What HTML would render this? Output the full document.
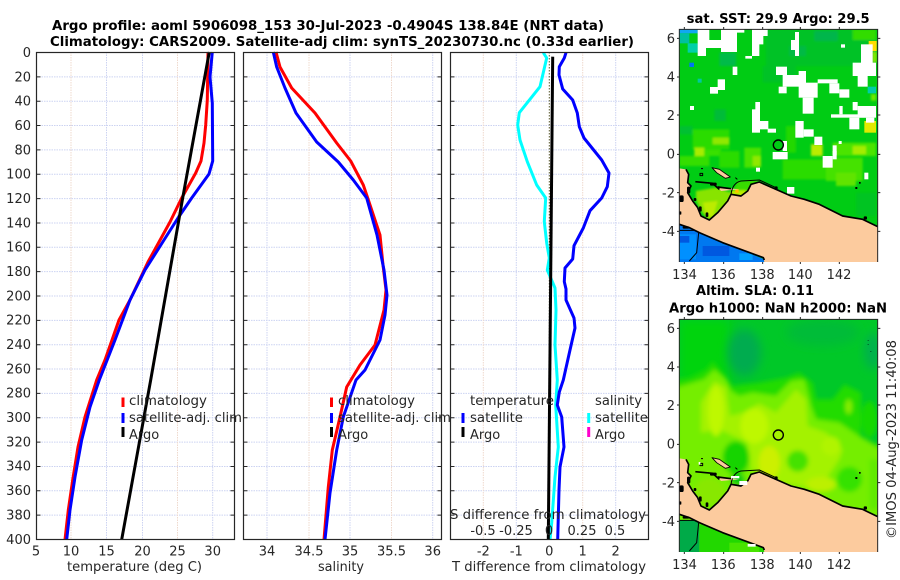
<!DOCTYPE html>
<html><head><meta charset="utf-8"><style>
html,body{margin:0;padding:0;background:#fff}
svg{display:block}
text{font-family:"DejaVu Sans","Liberation Sans",sans-serif;font-size:13px;fill:#262626}
.b{font-weight:bold;fill:#000}
.r{text-anchor:end}.m{text-anchor:middle}
</style></head><body>
<svg width="900" height="580" viewBox="0 0 900 580" xmlns="http://www.w3.org/2000/svg">
<defs>
<path id="hg" d="M0 76.85H198M0 101.2H198M0 125.55H198M0 149.9H198M0 174.25H198M0 198.6H198M0 222.95H198M0 247.3H198M0 271.65H198M0 296H198M0 320.35H198M0 344.7H198M0 369.05H198M0 393.4H198M0 417.75H198M0 442.1H198M0 466.45H198M0 490.8H198M0 515.15H198" fill="none" stroke="#ccd3f2" stroke-dasharray="1.5 1"/>
<path id="tk" d="M0 76.85h4M198 76.85h-4M0 101.2h4M198 101.2h-4M0 125.55h4M198 125.55h-4M0 149.9h4M198 149.9h-4M0 174.25h4M198 174.25h-4M0 198.6h4M198 198.6h-4M0 222.95h4M198 222.95h-4M0 247.3h4M198 247.3h-4M0 271.65h4M198 271.65h-4M0 296h4M198 296h-4M0 320.35h4M198 320.35h-4M0 344.7h4M198 344.7h-4M0 369.05h4M198 369.05h-4M0 393.4h4M198 393.4h-4M0 417.75h4M198 417.75h-4M0 442.1h4M198 442.1h-4M0 466.45h4M198 466.45h-4M0 490.8h4M198 490.8h-4M0 515.15h4M198 515.15h-4" fill="none" stroke="#262626"/>
<filter id="bl" x="-10%" y="-10%" width="120%" height="120%"><feGaussianBlur stdDeviation="7"/></filter>
<filter id="b1" x="-5%" y="-5%" width="110%" height="110%"><feGaussianBlur stdDeviation="3"/></filter>
<filter id="b2" x="-40%" y="-40%" width="180%" height="180%"><feGaussianBlur stdDeviation="14"/></filter>
<clipPath id="cm"><rect x="10" y="10" width="595" height="698"/></clipPath>
<g id="land">
<path d="M10 427L30 430L38 445L35 470L45 480L35 500L50 525L65 545L75 570L100 582L125 560L155 525L165 505L195 510L215 495L225 475L250 468L300 490L345 510L385 520L430 535L500 570L560 580L605 602V708H265L262 695L140 650L70 620L40 605L10 595Z" fill="#fccb9e"/>
<path d="M125 483L190 490L135 495Z" fill="#fccb9e"/>
<path d="M108 425L130 430L163 453L148 457L122 440Z" fill="#fccb9e"/>
<g fill="none" stroke="#000" stroke-width="5" stroke-linejoin="round" clip-path="url(#cm)">
<path d="M30 430L38 445L35 470L45 480L35 500L50 525L65 545L75 570L100 582L125 560L155 525L165 505L195 510L215 495L225 475L250 468L300 490L345 510L385 520L430 535L500 570L560 580L605 602"/>
<path d="M265 702L262 695L140 650L70 620L40 605L10 595"/>
<path d="M58 467L110 472L130 490M125 483L165 488" stroke-width="5"/>
<path d="M165 505Q170 470 195 465L250 462L300 485" stroke-width="3"/>
<path d="M108 425L130 430L163 453L148 457L122 440Z" stroke-width="2.500"/>
<path d="M72 442h8v7h-8zM178 455l6 5M75 428h6" stroke-width="3"/>
<path d="M68 620L62 680L40 705M10 613H55" stroke-width="3"/>
</g>
<g fill="#000">
<rect x="10" y="508" width="13" height="20" rx="5"/><rect x="33" y="482" width="10" height="20" rx="4"/><rect x="53" y="516" width="8" height="9" rx="3"/><rect x="69" y="541" width="8" height="16" rx="3"/><rect x="89" y="559" width="8" height="14" rx="3"/><rect x="10" y="556" width="6" height="10" rx="2"/><rect x="102" y="470" width="20" height="9" rx="3"/><rect x="296" y="481" width="9" height="11" rx="3"/><rect x="563" y="571" width="10" height="10" rx="3"/><rect x="538" y="483" width="6" height="6"/><rect x="549" y="468" width="5" height="5"/><rect x="20" y="601" width="20" height="7" rx="3"/>
</g>
</g>
<g id="fr" fill="none" stroke="#262626" stroke-width="3">
<path d="M10 708V10H605V708"/>
<path d="M25 10V3M143 10V3M260 10V3M373 10V3M490 10V3M25 708v6M143 708v6M260 708v6M373 708v6M490 708v6M605 37h8M605 153h8M605 267h8M605 385h8M605 500h8M605 616h8M10 37H3M10 153H3M10 267H3M10 385H3M10 500H3M10 616H3"/>
<circle cx="307" cy="357" r="15" stroke="#000" stroke-width="4.200"/>
</g>
</defs>
<rect width="900" height="580" fill="#fff"/>

<!-- titles -->
<text class="b" x="52" y="30" textLength="552" lengthAdjust="spacingAndGlyphs">Argo profile: aoml 5906098_153 30-Jul-2023 -0.4904S 138.84E (NRT data)</text>
<text class="b" x="50" y="46" textLength="584" lengthAdjust="spacingAndGlyphs">Climatology: CARS2009. Satellite-adj clim: synTS_20230730.nc (0.33d earlier)</text>

<!-- panel grids -->
<use href="#hg" x="36.5"/><use href="#hg" x="243.5"/><use href="#hg" x="450.5"/>
<g fill="none" stroke-dasharray="1.5 1">
<path d="M71 52V540M177.5 52V540M309 52V540M391.5 52V540M483.3 52V540M582.7 52V540" stroke="#efd9cd"/>
<path d="M106.5 52V540M142.5 52V540M212.7 52V540M267 52V540M350 52V540M432.7 52V540M516.3 52V540M615.7 52V540" stroke="#ccd3f2"/>
</g>
<path d="M549.3 52V540" fill="none" stroke="#5a5a30" stroke-dasharray="1.5 1.5"/>

<!-- curves -->
<g fill="none" stroke-width="3" stroke-linejoin="round">
<path stroke="#f00" d="M208 52L207.3 100L205.7 125L204 143L201 161L195.7 173L181.7 198L170 222L148 262L130 300L119 320L105 360L96.7 380L85 417L78 447L72.7 480L68.3 510L65 539.5"/>
<path stroke="#00f" d="M212.3 52L210 77L212.3 103L212.7 161L209 174L191.7 198L178 218L164 240L145 270L130 300L115 340L99.3 380L90 407L81.7 440L75 477L70 510L66.7 539.5"/>
<path stroke="#000" d="M209.3 52L182.7 198L150.7 380L121.7 539.5"/>
<path stroke="#f00" d="M276 52L280 67L291.7 88L315 113L336.7 143L350.7 161L363.3 185L367.7 198L380 235L383 265L386 290L384 310L375 345L360 365L346.7 387L340 417L332.3 450L328.3 487L324 539.5"/>
<path stroke="#00f" d="M273.3 52L276.7 67L285 88L296 113L316.7 142L338.3 162L353.3 180L366.7 198L377 235L384 270L387 295L385 315L380 340L365 370L356 380L343.3 417L336.7 450L330 493L325 539.5"/>
<path stroke="#0ff" d="M543.3 52.7L546.7 58L540 86.7L519.3 112.7L517.7 125L520 140L527.3 161.7L536.7 185L545.7 198L544.3 221.7L546.7 243L549.3 258L547.3 270L555 288L556 310L555 345L557.3 380L555.7 405L558.3 447L555 477L551.7 523L550 539.5"/>
<path stroke="#00f" d="M566 52.7L564.3 58L559.3 66.7L559 75L562.7 89L572.7 100L577.3 113L579.3 126.7L584 138L601.7 160L609 173L607.3 186.7L601.7 198L590 210.7L583.3 228L574 245.7L572.7 259L565 268L564.3 281.7L566 289L566 300L574 318L575 328L570 350L563.3 380L559.3 392L557.3 405L561.7 417L564 447L560 467L559 490L557.7 539.5"/>
<path stroke="#000" stroke-width="3" d="M552.7 56.7L548.3 539.5"/>
</g>

<use href="#tk" x="36.5"/><use href="#tk" x="243.5"/><use href="#tk" x="450.5"/>
<g fill="none" stroke="#262626" stroke-width="1.2">
<rect x="36.5" y="52.5" width="198" height="487"/>
<rect x="243.5" y="52.5" width="198" height="487"/>
<rect x="450.5" y="52.5" width="198" height="487"/>
</g>

<!-- y labels -->
<g>
<text class="r" x="31" y="57">0</text><text class="r" x="31" y="81.500">20</text><text class="r" x="31" y="105.500">40</text><text class="r" x="31" y="130">60</text><text class="r" x="31" y="154.500">80</text><text class="r" x="31" y="178.500">100</text><text class="r" x="31" y="203">120</text><text class="r" x="31" y="227.500">140</text><text class="r" x="31" y="251.500">160</text><text class="r" x="31" y="276">180</text><text class="r" x="31" y="300.500">200</text><text class="r" x="31" y="324.500">220</text><text class="r" x="31" y="349">240</text><text class="r" x="31" y="373.500">260</text><text class="r" x="31" y="397.500">280</text><text class="r" x="31" y="422">300</text><text class="r" x="31" y="446.500">320</text><text class="r" x="31" y="470.500">340</text><text class="r" x="31" y="495">360</text><text class="r" x="31" y="519.500">380</text><text class="r" x="31" y="544">400</text>
</g>
<!-- x tick labels -->
<g>
<text class="m" x="36" y="555.500">5</text><text class="m" x="71" y="555.500">10</text><text class="m" x="106.500" y="555.500">15</text><text class="m" x="142.500" y="555.500">20</text><text class="m" x="177.500" y="555.500">25</text><text class="m" x="212.700" y="555.500">30</text>
<text class="m" x="267" y="555.500">34</text><text class="m" x="309" y="555.500">34.5</text><text class="m" x="350" y="555.500">35</text><text class="m" x="391.500" y="555.500">35.5</text><text class="m" x="432.700" y="555.500">36</text>
<text class="m" x="483.300" y="555.500">-2</text><text class="m" x="516.300" y="555.500">-1</text><text class="m" x="549.300" y="555.500">0</text><text class="m" x="582.700" y="555.500">1</text><text class="m" x="615.700" y="555.500">2</text>
<text x="67" y="571" textLength="135" lengthAdjust="spacingAndGlyphs">temperature (deg C)</text>
<text x="318" y="571" textLength="46" lengthAdjust="spacingAndGlyphs">salinity</text>
<text x="452" y="571" textLength="194" lengthAdjust="spacingAndGlyphs">T difference from climatology</text>
</g>

<!-- legends -->
<g>
<text x="129" y="405" textLength="78" lengthAdjust="spacingAndGlyphs">climatology</text>
<text x="129" y="422" textLength="113" lengthAdjust="spacingAndGlyphs">satellite-adj. clim</text>
<text x="129" y="439">Argo</text>
<text x="338" y="405" textLength="77" lengthAdjust="spacingAndGlyphs">climatology</text>
<text x="338" y="422" textLength="113" lengthAdjust="spacingAndGlyphs">satellite-adj. clim</text>
<text x="338" y="439">Argo</text>
<text x="470" y="405" textLength="84" lengthAdjust="spacingAndGlyphs">temperature</text>
<text x="470" y="422" textLength="53" lengthAdjust="spacingAndGlyphs">satellite</text>
<text x="470" y="439">Argo</text>
<text x="595" y="405" textLength="47" lengthAdjust="spacingAndGlyphs">salinity</text>
<text x="595" y="422" textLength="53" lengthAdjust="spacingAndGlyphs">satellite</text>
<text x="595" y="439">Argo</text>
<path d="M123 397.500V407M331.500 397.500V407" stroke="#f00" stroke-width="3" fill="none"/>
<path d="M123 413V423M331.500 413V423M463 413V423" stroke="#00f" stroke-width="3" fill="none"/>
<path d="M123 427V437M331.500 427V437M463 427V437" stroke="#000" stroke-width="3" fill="none"/>
<path d="M588.700 413V423" stroke="#0ff" stroke-width="3" fill="none"/>
<path d="M588.700 427V437" stroke="#f0c" stroke-width="3" fill="none"/>
</g>
<text x="450" y="519" textLength="196" lengthAdjust="spacingAndGlyphs">S difference from climatology</text>
<text class="m" x="483" y="535">-0.5</text><text class="m" x="516" y="535">-0.25</text><text class="m" x="549" y="535">0</text><text class="m" x="582" y="535">0.25</text><text class="m" x="615" y="535">0.5</text>

<!-- top map -->
<text class="b" x="686.700" y="23" textLength="183" lengthAdjust="spacingAndGlyphs">sat. SST: 29.9 Argo: 29.5</text>
<g transform="translate(676 26) scale(.33333)">
<g clip-path="url(#cm)">
<rect x="10" y="10" width="595" height="698" fill="#00cc14"/>
<g filter="url(#b1)">
<rect x="270" y="10" width="330" height="110" fill="#00c226"/>
<rect x="260" y="120" width="100" height="50" fill="#00c226"/>
<rect x="415" y="15" width="70" height="30" fill="#00b64c"/>
<rect x="340" y="60" width="50" height="30" fill="#00ba44"/>
<rect x="130" y="80" width="50" height="40" fill="#00bb48"/>
<rect x="115" y="250" width="35" height="35" fill="#00bc38"/>
<rect x="10" y="300" width="40" height="25" fill="#00c030"/>
<rect x="50" y="310" width="110" height="60" fill="#2cdc00"/>
<rect x="110" y="335" width="50" height="20" fill="#90e800"/>
<rect x="55" y="365" width="30" height="25" fill="#a8ec00"/>
<rect x="85" y="370" width="50" height="20" fill="#38e000"/>
<rect x="10" y="390" width="90" height="30" fill="#34de00"/>
<rect x="130" y="375" width="60" height="50" fill="#2cdc00"/>
<rect x="205" y="365" width="50" height="60" fill="#48e200"/>
<rect x="230" y="390" width="25" height="30" fill="#90e800"/>
<rect x="330" y="300" width="30" height="80" fill="#24d800"/>
<rect x="320" y="400" width="130" height="60" fill="#2cdc00"/>
<rect x="405" y="355" width="35" height="35" fill="#bcec00"/>
<rect x="470" y="350" width="130" height="40" fill="#4ce400"/>
<rect x="530" y="360" width="40" height="25" fill="#a4ec00"/>
<rect x="450" y="395" width="110" height="70" fill="#44e200"/>
<rect x="480" y="440" width="60" height="40" fill="#60e400"/>
<rect x="530" y="10" width="70" height="32" fill="#30dc00"/>
<rect x="590" y="78" width="12" height="30" fill="#88e800"/>
<rect x="585" y="204" width="15" height="20" fill="#70e800"/>
<rect x="540" y="500" width="60" height="70" fill="#00c420"/>
<path d="M60 495L120 485L165 500L170 510L130 560L100 585L75 555L60 520Z" fill="#88e400"/>
<path d="M80 530L125 525L110 575L90 565Z" fill="#bcec00"/>
<path d="M185 465L250 462L215 500L165 510Z" fill="#38dc00"/>
<rect x="165" y="493" width="45" height="20" fill="#bcec00"/>
</g>
<rect x="10" y="10" width="55" height="12" fill="#10a8f0"/>
<rect x="10" y="22" width="30" height="30" fill="#00c0a0"/>
<rect x="35" y="52" width="30" height="28" fill="#00d0a8"/>
<rect x="40" y="110" width="14" height="13" fill="#0078f0"/>
<rect x="65" y="158" width="12" height="12" fill="#00c8a0"/>
<rect x="565" y="285" width="35" height="35" fill="#e0ea00"/>
<rect x="578" y="45" width="24" height="30" fill="#ffdc00"/>
<rect x="575" y="182" width="25" height="20" fill="#00ccaa"/>
<rect x="178" y="490" width="10" height="10" fill="#ffc000"/>
<path d="M10 595L70 620L140 650L265 700V708H10Z" fill="#0078f0"/>
<rect x="10" y="625" width="50" height="75" fill="#0090ff"/>
<rect x="10" y="630" width="30" height="20" fill="#0058e0"/>
<rect x="80" y="660" width="80" height="30" fill="#0058e0"/>
<rect x="190" y="682" width="40" height="20" fill="#00a0ff"/>
<!-- white holes -->
<g fill="#fff">
<path d="M65 10H100V42H135V10H205V20H183V78H135V66H90V90H65Z"/>
<path d="M228 20V10H275V30H262V55H250V90H228V98H208V90H228V78Z"/>
<rect x="345" y="42" width="12" height="30"/><rect x="357" y="18" width="12" height="72"/>
<rect x="170" y="122" width="14" height="25"/><rect x="125" y="160" width="22" height="32"/><rect x="102" y="183" width="24" height="20"/>
<rect x="300" y="122" width="33" height="25"/><rect x="320" y="147" width="70" height="35"/><rect x="308" y="182" width="24" height="20"/><rect x="368" y="135" width="22" height="80"/><rect x="390" y="170" width="35" height="45"/><rect x="380" y="215" width="33" height="48"/><rect x="425" y="160" width="60" height="12"/><rect x="460" y="172" width="30" height="30"/><rect x="490" y="190" width="30" height="25"/>
<rect x="555" y="55" width="35" height="57"/><rect x="530" y="110" width="70" height="40"/><rect x="545" y="150" width="30" height="32"/>
<rect x="530" y="228" width="15" height="25"/><rect x="490" y="240" width="10" height="25"/><rect x="545" y="240" width="55" height="35"/><rect x="465" y="265" width="130" height="10"/><rect x="520" y="275" width="30" height="35"/><rect x="570" y="275" width="25" height="15"/>
<rect x="238" y="228" width="14" height="25"/><rect x="228" y="250" width="24" height="70"/><rect x="252" y="285" width="25" height="25"/><rect x="275" y="308" width="25" height="12"/>
<rect x="358" y="285" width="25" height="50"/><rect x="383" y="310" width="30" height="22"/><rect x="415" y="332" width="24" height="25"/>
<rect x="320" y="345" width="13" height="30"/><rect x="290" y="378" width="45" height="22"/>
<rect x="42" y="240" width="12" height="12"/><rect x="495" y="55" width="12" height="10"/><rect x="470" y="358" width="12" height="30"/><rect x="440" y="390" width="30" height="35"/><rect x="470" y="375" width="12" height="25"/>
<rect x="240" y="425" width="12" height="12"/><rect x="565" y="440" width="12" height="20"/><rect x="333" y="483" width="22" height="20"/><rect x="488" y="345" width="9" height="9"/>
</g>
</g>
<use href="#land"/>
<use href="#fr"/>
</g>
<g><text class="r" x="675" y="43">6</text><text class="r" x="675" y="81.500">4</text><text class="r" x="675" y="120">2</text><text class="r" x="675" y="158.500">0</text><text class="r" x="675" y="197.500">-2</text><text class="r" x="675" y="236">-4</text>
<text class="m" x="684.500" y="279">134</text><text class="m" x="723.300" y="279">136</text><text class="m" x="762.300" y="279">138</text><text class="m" x="800.300" y="279">140</text><text class="m" x="839" y="279">142</text></g>

<!-- lower map -->
<text class="b" x="696" y="295" textLength="118" lengthAdjust="spacingAndGlyphs">Altim. SLA: 0.11</text>
<text class="b" x="669" y="312.500" textLength="218" lengthAdjust="spacingAndGlyphs">Argo h1000: NaN h2000: NaN</text>
<g transform="translate(676 316) scale(.33333)">
<g clip-path="url(#cm)">
<rect x="10" y="10" width="595" height="698" fill="#00c828"/>
<rect x="10" y="10" width="150" height="190" fill="#00d40c" filter="url(#b2)"/>
<ellipse cx="205" cy="110" rx="50" ry="70" fill="#00ac50" filter="url(#b2)"/>
<ellipse cx="590" cy="105" rx="25" ry="55" fill="#00b050" filter="url(#b2)"/>
<ellipse cx="440" cy="50" rx="110" ry="40" fill="#00bc38" filter="url(#b2)"/>
<g filter="url(#bl)">
<path d="M0 190L40 185L90 160L110 135L135 165L170 210L250 200L330 185L370 170L410 200L420 250L470 250L505 205L555 230L555 360L615 390V720H0Z" fill="#22dc00"/>
<path d="M0 215L85 190L115 160L150 190L165 225L190 240L230 230L300 240L345 195L385 190L405 270L420 310L490 320L555 365L615 400V720H0Z" fill="#74ee00"/>
<path d="M75 260L115 195L150 215L162 300L200 290L250 262L300 290L360 220L390 250L395 330L450 350L500 400L490 430L430 520L300 500L225 460L215 380L130 340L75 350Z" fill="#a4f200"/>
<ellipse cx="120" cy="285" rx="24" ry="75" fill="#bef800"/>
<ellipse cx="235" cy="330" rx="42" ry="52" fill="#bef800"/>
<ellipse cx="280" cy="440" rx="32" ry="50" fill="#ccf000"/>
<ellipse cx="465" cy="390" rx="28" ry="28" fill="#b0f400"/>
<ellipse cx="180" cy="425" rx="40" ry="50" fill="#14d400"/>
<ellipse cx="365" cy="435" rx="32" ry="32" fill="#44e200"/>
<ellipse cx="520" cy="490" rx="38" ry="38" fill="#34e200"/>
<ellipse cx="518" cy="272" rx="10" ry="22" fill="#88ee00"/>
<ellipse cx="580" cy="310" rx="24" ry="55" fill="#14d800"/>
<ellipse cx="100" cy="525" rx="45" ry="40" fill="#88e800"/>
<ellipse cx="185" cy="490" rx="22" ry="18" fill="#00cc10"/>
<ellipse cx="435" cy="505" rx="45" ry="22" fill="#bcf000"/>
<rect x="580" y="430" width="30" height="150" fill="#60ea00"/>
</g>
<rect x="70" y="625" width="210" height="90" fill="#22d800"/>
<rect x="160" y="680" width="90" height="30" fill="#48e400"/>
<rect x="10" y="612" width="60" height="100" fill="#00aa48"/>
<path d="M575 72h3v3h-3zM575 84h3v3h-3zM583 105h3v3h-3z" fill="#005020"/>
</g>
<use href="#land"/>
<rect x="190" y="495" width="24" height="12" fill="#fff"/>
<rect x="165" y="480" width="25" height="7" fill="#fff"/>
<rect x="215" y="684" width="24" height="8" fill="#fff"/>
<rect x="68" y="438" width="5" height="8" fill="#fff"/>
<use href="#fr"/>
</g>
<g><text class="r" x="675" y="333">6</text><text class="r" x="675" y="371.500">4</text><text class="r" x="675" y="410">2</text><text class="r" x="675" y="448.500">0</text><text class="r" x="675" y="487.500">-2</text><text class="r" x="675" y="526">-4</text>
<text class="m" x="684.500" y="569">134</text><text class="m" x="723.300" y="569">136</text><text class="m" x="762.300" y="569">138</text><text class="m" x="800.300" y="569">140</text><text class="m" x="839" y="569">142</text></g>

<text transform="translate(896 539) rotate(-90)" x="0" y="0" textLength="199" lengthAdjust="spacingAndGlyphs">©IMOS 04-Aug-2023 11:40:08</text>
</svg>
</body></html>
